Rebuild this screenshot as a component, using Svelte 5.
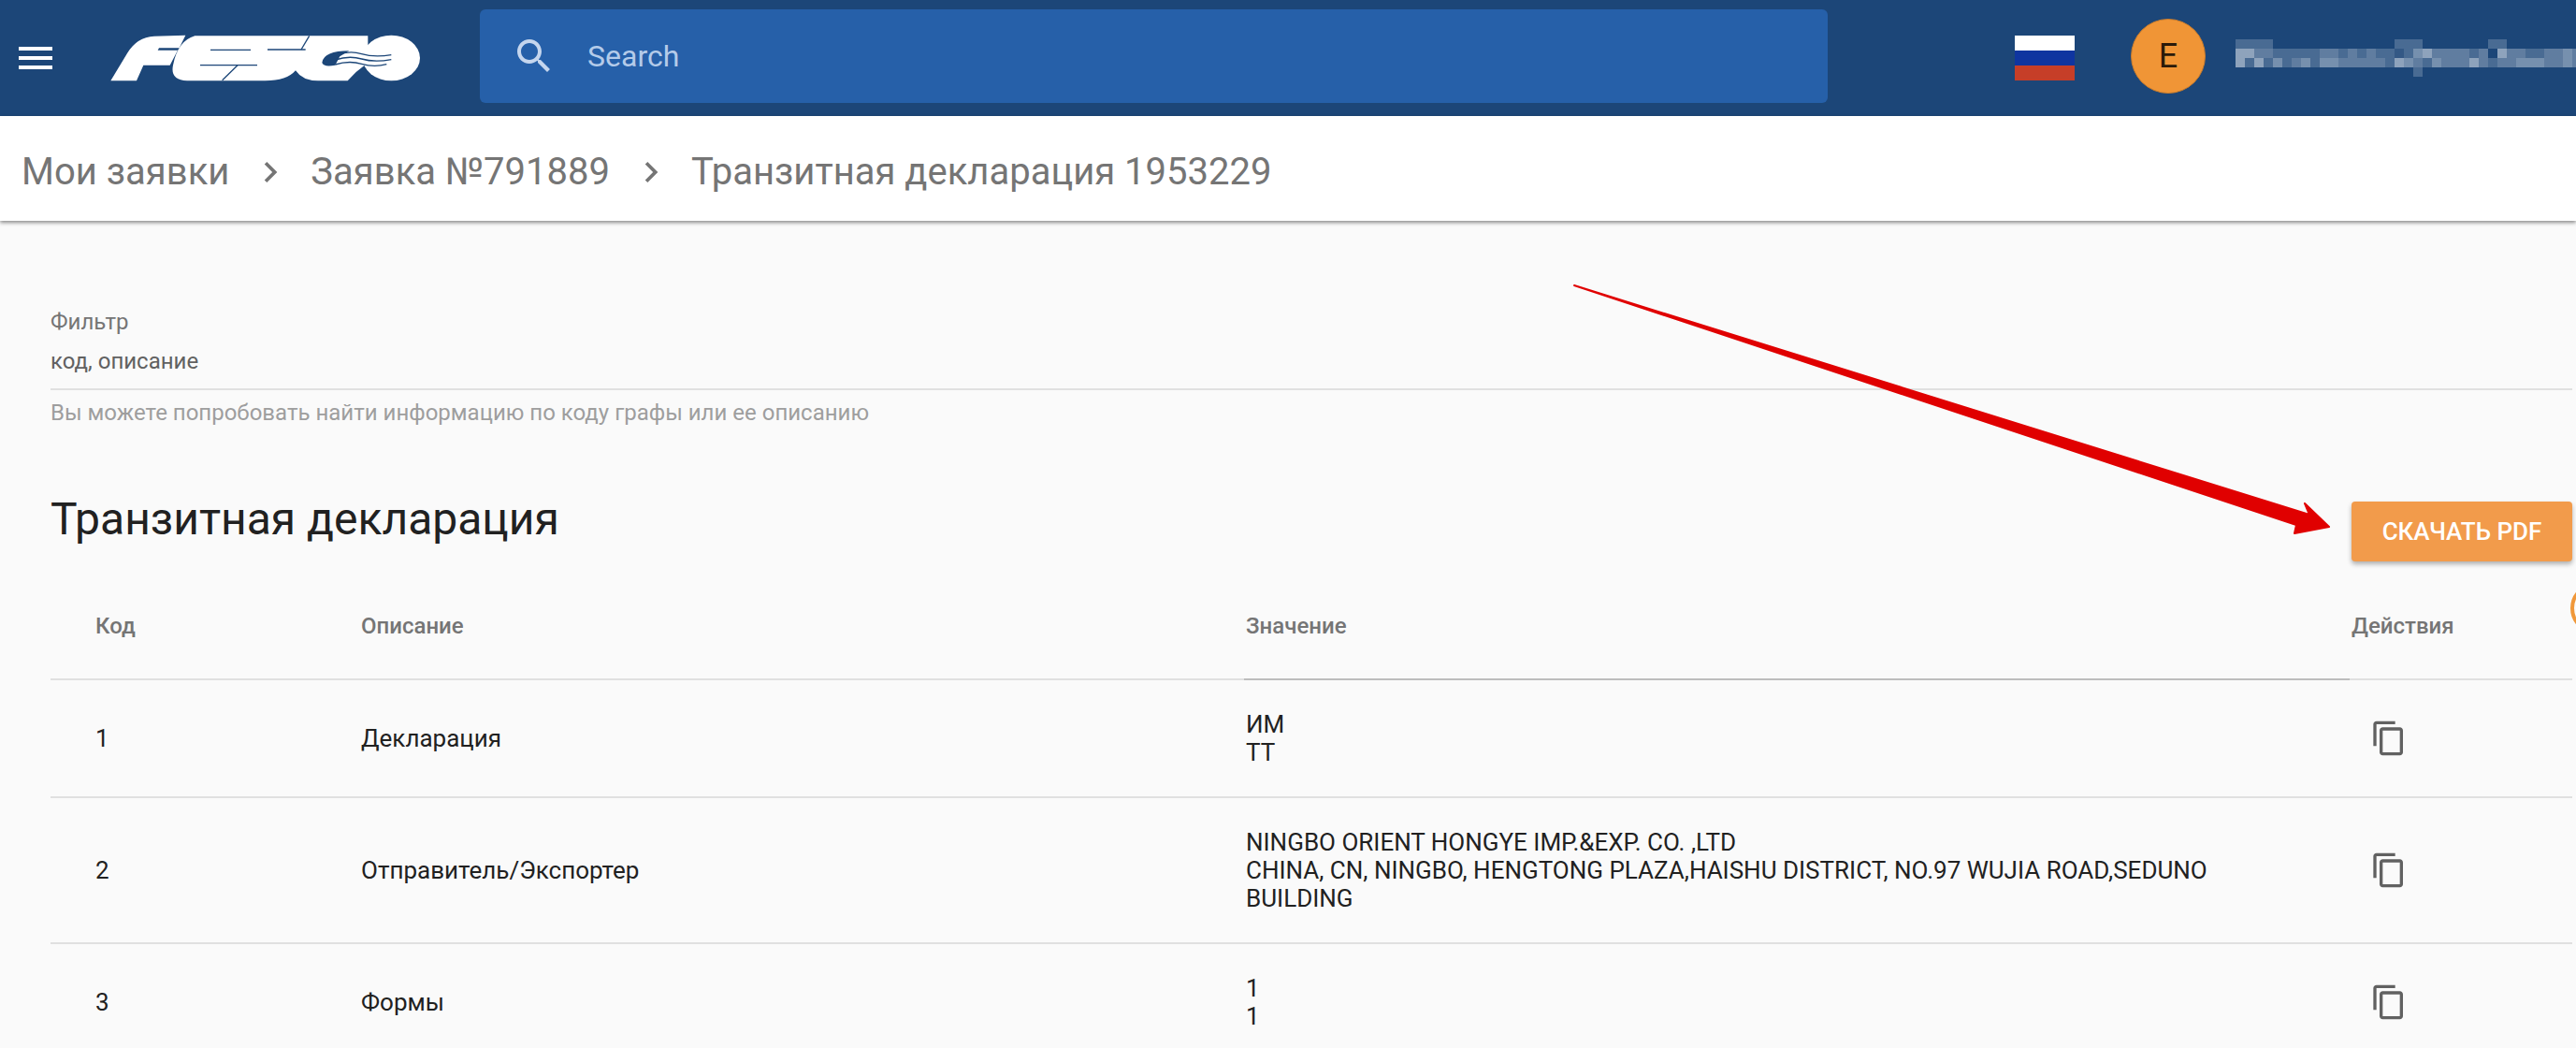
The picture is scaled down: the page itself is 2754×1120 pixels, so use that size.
<script>
  // the blurred user name in the header, one digit of opacity per block
  const blurRows = [
    "2222000000000000022200000002200000000",
    "5533222223323232212453333230533223343",
    "5252423424433333254324333532334443343",
    "0000000000000000000200000000000000000"
  ];

  const rows = [
    { code: "1", name: "Декларация", value: ["ИМ", "ТТ"] },
    {
      code: "2",
      name: "Отправитель/Экспортер",
      value: [
        "NINGBO ORIENT HONGYE IMP.&EXP. CO. ,LTD",
        "CHINA, CN, NINGBO, HENGTONG PLAZA,HAISHU DISTRICT, NO.97 WUJIA ROAD,SEDUNO BUILDING"
      ]
    },
    { code: "3", name: "Формы", value: ["1", "1"] }
  ];
</script>

<div class="page">
  <header class="topbar">
    <button class="menu" aria-label="menu">
      <svg viewBox="0 0 24 24" width="48" height="48"><path d="M3 18h18v-2H3v2zm0-5h18v-2H3v2zm0-7v2h18V6H3z" fill="#fff" /></svg>
    </button>
    <svg class="logo" viewBox="0 0 1050 210" width="350" height="70" aria-label="FESCO">
      <g fill="#fff">
        <path d="M25 178 L78 90 Q108 38 165 35 L265 32 L245 73 L180 73 L176 80 L240 80 L215 128 L130 128 L108 178 Z" />
        <path d="M295 34 L850 34 L850 120 L812 150 L785 178 L690 178 Q640 178 618 145 Q590 178 520 178 L270 178 Q215 175 225 128 Q240 50 295 34 Z" />
        <ellipse cx="925" cy="105" rx="92" ry="73" />
      </g>
      <path d="M790 82 Q708 82 703 120 Q708 135 745 128 L760 100 Z" fill="#1c4678" />
      <g fill="none" stroke="#1c4678" stroke-width="4">
        <path d="M345 79 H474" />
        <path d="M312 128 H495" />
        <path d="M528 78 H650" />
        <path d="M432 128 L383 176" />
        <path d="M662 34 L636 78" />
        <path d="M750 96 Q790 80 830 92 T925 95" />
        <path d="M745 111 Q790 96 830 108 T925 110" />
        <path d="M745 126 Q790 112 830 124 T910 125" />
      </g>
    </svg>
    <div class="search">
      <svg viewBox="0 0 24 24" width="48" height="48"><path d="M15.5 14h-.79l-.28-.27C15.41 12.59 16 11.11 16 9.5 16 5.91 13.09 3 9.5 3S3 5.91 3 9.5 5.91 16 9.5 16c1.61 0 3.09-.59 4.23-1.57l.27.28v.79l5 4.99L20.49 19l-4.99-5zm-6 0C7.01 14 5 11.99 5 9.5S7.01 5 9.5 5 14 7.01 14 9.5 11.99 14 9.5 14z" fill="#c5d6ee" /></svg>
      <span>Search</span>
    </div>
    <div class="flag"><i class="white"></i><i class="blue"></i><i class="red"></i></div>
    <div class="avatar">E</div>
    <div class="blurname" aria-hidden="true">
      {#each blurRows as row}
        {#each row.split("") as cell}
          <i style="opacity: {Number(cell) / 10}"></i>
        {/each}
      {/each}
    </div>
  </header>

  <nav class="crumbs">
    <span>Мои заявки</span>
    <svg viewBox="0 0 24 24" width="44" height="44"><path d="M10 6L8.59 7.41 13.17 12l-4.58 4.59L10 18l6-6z" /></svg>
    <span>Заявка №791889</span>
    <svg viewBox="0 0 24 24" width="44" height="44"><path d="M10 6L8.59 7.41 13.17 12l-4.58 4.59L10 18l6-6z" /></svg>
    <span>Транзитная декларация 1953229</span>
  </nav>

  <main class="content">
    <div class="filter">
      <div class="filter-label">Фильтр</div>
      <div class="filter-input">код, описание</div>
      <div class="filter-help">Вы можете попробовать найти информацию по коду графы или ее описанию</div>
    </div>

    <div class="title-row">
      <h1>Транзитная декларация</h1>
      <button class="download">СКАЧАТЬ PDF</button>
    </div>

    <div class="table">
      <div class="row head">
        <div class="cell">Код</div>
        <div class="cell">Описание</div>
        <div class="cell value">Значение</div>
        <div class="cell">Действия</div>
      </div>
      {#each rows as row}
        <div class="row">
          <div class="cell">{row.code}</div>
          <div class="cell">{row.name}</div>
          <div class="cell value">
            {#each row.value as line}
              <div>{line}</div>
            {/each}
          </div>
          <div class="cell actions">
            <svg viewBox="0 0 24 24" width="40" height="40"><path d="M16 1H4c-1.1 0-2 .9-2 2v14h2V3h12V1zm3 4H8c-1.1 0-2 .9-2 2v14c0 1.1.9 2 2 2h11c1.1 0 2-.9 2-2V7c0-1.1-.9-2-2-2zm0 16H8V7h11v14z" fill="#616161" /></svg>
          </div>
        </div>
      {/each}
    </div>
  </main>

  <!-- annotation drawn over the screenshot -->
  <svg class="arrow" viewBox="0 0 2754 1120" width="2754" height="1120">
    <path d="M1683 305 L2469 550 L2464 538 L2490 563 L2453 570 L2455 561 Z" fill="#e00000" stroke="#e00000" stroke-width="2" stroke-linejoin="round" />
  </svg>
  <div class="ring"></div>
</div>

<style>
  :global(body) {
    margin: 0;
    background: #fafafa;
  }

  .page {
    position: relative;
    width: 2754px;
    height: 1120px;
    overflow: hidden;
    background: #fafafa;
    font-family: Roboto, "Noto Sans", sans-serif;
    color: #212121;
  }

  .topbar {
    display: flex;
    align-items: center;
    height: 124px;
    padding-left: 14px;
    background: #1c4678;
  }

  .topbar > * {
    flex: none;
  }

  .menu {
    display: flex;
    width: 48px;
    height: 48px;
    padding: 0;
    border: 0;
    background: none;
  }

  .logo {
    margin-left: 48px;
  }

  .search {
    display: flex;
    align-items: center;
    gap: 33px;
    box-sizing: border-box;
    width: 1441px;
    height: 100px;
    margin: -4px 0 0 53px;
    padding-left: 34px;
    border-radius: 6px;
    background: #2660a9;
    color: #b4cbe9;
    font-size: 32px;
  }

  .flag {
    display: flex;
    flex-direction: column;
    width: 64px;
    height: 49px;
    margin-left: 200px;
  }

  .flag i {
    flex: 1;
  }

  .white { background: #fff; }
  .blue { background: #0f35a0; }
  .red { background: #c63e28; }

  .avatar {
    display: flex;
    align-items: center;
    justify-content: center;
    box-sizing: border-box;
    width: 80px;
    height: 80px;
    margin: -4px 0 0 60px;
    border: 1px solid #c97c2c;
    border-radius: 50%;
    background: #f09536;
    color: #2b1a0a;
    font-size: 36px;
  }

  .blurname {
    display: grid;
    grid-template-columns: repeat(37, 10px);
    grid-auto-rows: 10px;
    margin: 0 0 0 32px;
  }

  .blurname i {
    background: #fff;
  }

  .crumbs {
    position: relative;
    display: flex;
    align-items: center;
    gap: 21.5px;
    box-sizing: border-box;
    height: 112px;
    padding: 7px 0 0 23px;
    background: #fff;
    box-shadow: 0 2px 4px rgba(0, 0, 0, 0.45);
    color: #757575;
    font-size: 40px;
  }

  .crumbs svg {
    fill: #757575;
  }

  .content {
    padding: 94px 4px 0 54px;
  }

  .filter-label,
  .filter-input,
  .filter-help {
    font-size: 24px;
    line-height: 28px;
  }

  .filter-label {
    color: #757575;
  }

  .filter-input {
    margin-top: 14px;
    padding-bottom: 15px;
    border-bottom: 2px solid #e0e0e0;
    color: #616161;
  }

  .filter-help {
    margin-top: 10px;
    color: #9e9e9e;
  }

  .title-row {
    display: flex;
    align-items: center;
    justify-content: space-between;
    height: 64px;
    margin-top: 81px;
  }

  h1 {
    margin: 0 0 28px;
    font-size: 48px;
    font-weight: 400;
  }

  .download {
    width: 236px;
    height: 64px;
    padding: 0;
    border: 0;
    border-radius: 4px;
    background: #f29b4b;
    box-shadow: 0 3px 5px rgba(0, 0, 0, 0.3);
    color: #fff;
    font-family: inherit;
    font-size: 26px;
    font-weight: 500;
  }

  .row {
    display: grid;
    grid-template-columns: 332px 946px 1182px 236px;
    align-items: center;
    padding: 32px 0;
    border-bottom: 2px solid #e0e0e0;
    font-size: 26px;
    line-height: 30px;
  }

  .row .cell:first-child {
    padding-left: 48px;
  }

  .head {
    position: relative;
    height: 127px;
    box-sizing: border-box;
    padding: 12px 0 0;
    color: #757575;
    font-size: 24px;
    font-weight: 500;
  }

  .head .value::after {
    content: "";
    position: absolute;
    left: 1276px;
    width: 1182px;
    bottom: -2px;
    height: 2px;
    background: #bdbdbd;
  }

  .value {
    padding-right: 140px;
  }

  .actions {
    display: flex;
    padding-left: 20px;
  }

  .arrow {
    position: absolute;
    top: 0;
    left: 0;
    pointer-events: none;
  }

  .ring {
    position: absolute;
    left: 2748px;
    top: 622px;
    width: 56px;
    height: 56px;
    box-sizing: border-box;
    border: 4px solid #f0983a;
    border-radius: 50%;
  }
</style>
